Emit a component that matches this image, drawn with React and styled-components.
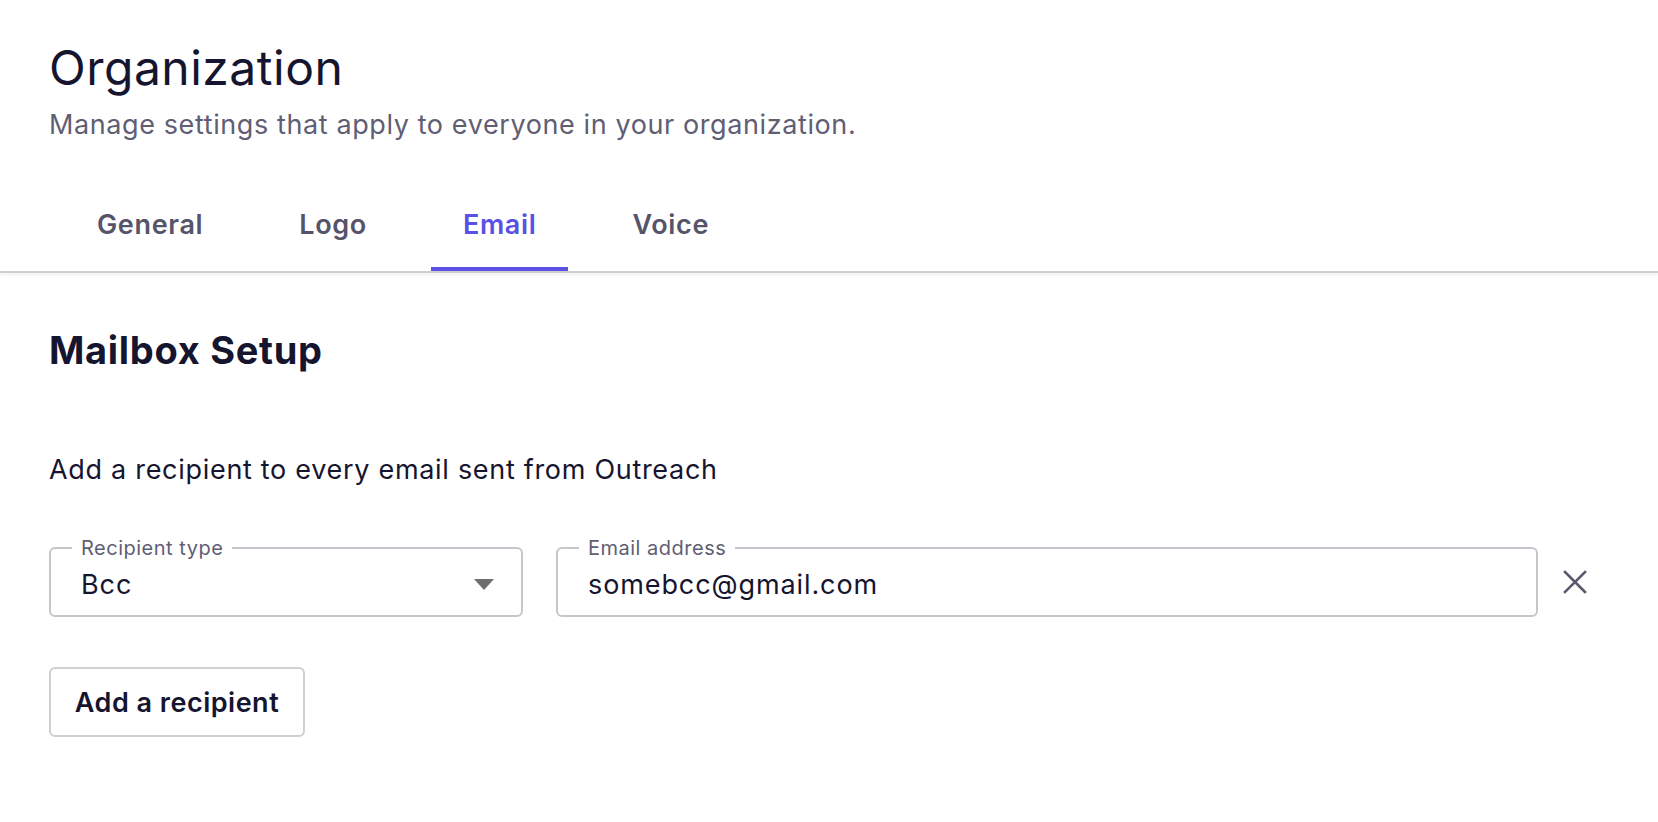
import styled, { createGlobalStyle } from "styled-components";

const GlobalStyle = createGlobalStyle`
  html, body {
    margin: 0;
    padding: 0;
    background: #fff;
    font-family: Inter, "Noto Sans", sans-serif;
    color: #16152f;
  }
`;

const Page = styled.div`
  width: 1658px;
  min-height: 822px;
  background: #fff;
`;

const Header = styled.header`
  padding: 38px 49px 0;
  border-bottom: 2px solid #d0d0d4;
  box-shadow: 0 2px 3px rgba(0, 0, 0, 0.06);
`;

const Title = styled.h1`
  margin: 0;
  font-size: 48px;
  font-weight: 400;
  line-height: 60px;
  letter-spacing: 0.5px;
  color: #16152f;
`;

const Subtitle = styled.p`
  margin: 9px 0 0;
  font-size: 27px;
  line-height: 36px;
  font-weight: 400;
  letter-spacing: 0.6px;
  color: #5f5e73;
`;

const Tabs = styled.nav`
  display: flex;
  margin-top: 34px;
`;

const Tab = styled.div`
  margin: 0 16px;
  padding: 4px 32px 0;
  height: 94px;
  box-sizing: border-box;
  display: flex;
  align-items: center;
  font-size: 27px;
  font-weight: 600;
  letter-spacing: 0.65px;
  color: ${({ active }) => (active ? "#5a50e6" : "#55546a")};
  border-bottom: 4px solid ${({ active }) => (active ? "#5a50e6" : "transparent")};
`;

const Content = styled.main`
  padding: 0 49px;
`;

const SectionTitle = styled.h2`
  margin: 53px 0 0;
  font-size: 38px;
  font-weight: 700;
  line-height: 48px;
  letter-spacing: 0.7px;
  color: #16152f;
`;

const Description = styled.p`
  margin: 78px 0 0;
  font-size: 27px;
  line-height: 36px;
  letter-spacing: 0.7px;
  color: #16152f;
`;

const FieldRow = styled.div`
  display: flex;
  align-items: center;
  margin-top: 49px;
`;

const Field = styled.fieldset`
  margin: 0;
  padding: 0 30px;
  box-sizing: border-box;
  width: ${({ width }) => width}px;
  height: 80px;
  border: 2px solid #c6c6cc;
  border-radius: 6px;
  display: flex;
  align-items: center;
  & + & {
    margin-left: 33px;
  }
`;

const Legend = styled.legend`
  padding: 0 9px;
  margin-left: -9px;
  font-size: 20px;
  line-height: 22px;
  letter-spacing: 0.5px;
  color: #5f5e73;
`;

const Value = styled.span`
  flex: 1;
  font-size: 27px;
  letter-spacing: 0.9px;
  color: #16152f;
  margin-top: -6px;
`;

const Caret = styled.span`
  width: 0;
  height: 0;
  border-left: 10px solid transparent;
  border-right: 10px solid transparent;
  border-top: 11px solid #6e6e6e;
  margin-top: -6px;
  margin-right: -3px;
`;

const CloseButton = styled.button`
  margin-left: 22px;
  margin-top: 10px;
  background: none;
  border: 0;
  padding: 0;
  width: 30px;
  height: 30px;
  display: flex;
  align-items: center;
  justify-content: center;
  color: #5a596e;
  cursor: pointer;
`;

const Button = styled.button`
  display: block;
  margin-top: 50px;
  width: 256px;
  height: 70px;
  box-sizing: border-box;
  border: 2px solid #cfcfd4;
  border-radius: 6px;
  background: #fff;
  font-family: Inter, "Noto Sans", sans-serif;
  font-size: 27px;
  font-weight: 600;
  letter-spacing: 0.5px;
  color: #16152f;
  cursor: pointer;
`;

export default function App() {
  return (
    <Page>
      <GlobalStyle />
      <Header>
        <Title>Organization</Title>
        <Subtitle>Manage settings that apply to everyone in your organization.</Subtitle>
        <Tabs>
          <Tab>General</Tab>
          <Tab>Logo</Tab>
          <Tab active>Email</Tab>
          <Tab>Voice</Tab>
        </Tabs>
      </Header>
      <Content>
        <SectionTitle>Mailbox Setup</SectionTitle>
        <Description>Add a recipient to every email sent from Outreach</Description>
        <FieldRow>
          <Field width={474}>
            <Legend>Recipient type</Legend>
            <Value>Bcc</Value>
            <Caret />
          </Field>
          <Field width={982}>
            <Legend>Email address</Legend>
            <Value>somebcc@gmail.com</Value>
          </Field>
          <CloseButton aria-label="Remove">
            <svg width="24" height="24" viewBox="0 0 24 24" fill="none" stroke="currentColor" strokeWidth="2.6" strokeLinecap="square">
              <path d="M2 2L22 22M22 2L2 22" />
            </svg>
          </CloseButton>
        </FieldRow>
        <Button>Add a recipient</Button>
      </Content>
    </Page>
  );
}
